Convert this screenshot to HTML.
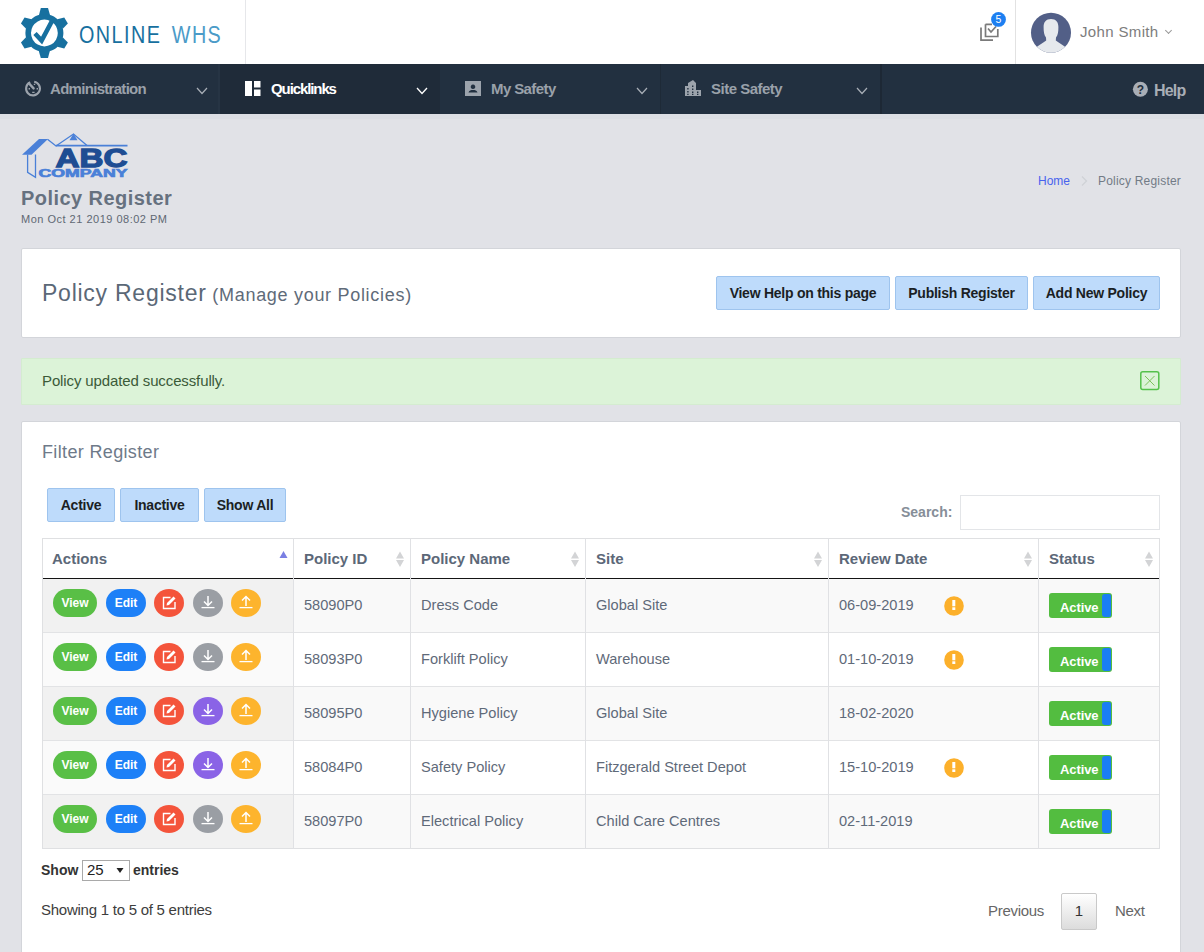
<!DOCTYPE html>
<html><head><meta charset="utf-8">
<style>
*{box-sizing:border-box;margin:0;padding:0}
html,body{width:1204px;height:952px;overflow:hidden;background:#e1e2e7;font-family:"Liberation Sans",sans-serif;color:#6c7683}
.abs{position:absolute}
#hdr{position:absolute;left:0;top:0;width:1204px;height:64px;background:#fff}
#nav{position:absolute;left:0;top:64px;width:1204px;height:50px;background:#223040}
.ni{position:absolute;top:0;height:50px;width:220px}
.nt{position:absolute;top:16px;font-size:15px;font-weight:bold;color:#9aa1aa;white-space:nowrap}
.chev{position:absolute;top:21px;width:8px;height:8px;border-right:1.3px solid #a9afb7;border-bottom:1.3px solid #a9afb7;transform:rotate(45deg)}
.card{position:absolute;background:#fff;border:1px solid #d3d5da;border-radius:2px}
.btn{position:absolute;background:#bedbfb;border:1px solid #9ec4ee;border-radius:2px;color:#1b1f24;font-size:14px;letter-spacing:-0.25px;font-weight:bold;text-align:center;white-space:nowrap}
table{border-collapse:collapse}
.th{position:absolute;font-size:15px;font-weight:bold;color:#5c6878}
.td{position:absolute;font-size:14.6px;color:#5f6a79;white-space:nowrap}
</style></head><body>
<div id="hdr">
 <svg class="abs" style="left:0;top:0" width="80" height="64" viewBox="0 0 80 64">
  <g fill="#17709f">
   <path id="tooth" d="M40.8 8 L48 8 L50 15 L39 15 Z"/>
   <use href="#tooth" transform="rotate(60 44.4 33)"/>
   <use href="#tooth" transform="rotate(120 44.4 33)"/>
   <use href="#tooth" transform="rotate(180 44.4 33)"/>
   <use href="#tooth" transform="rotate(240 44.4 33)"/>
   <use href="#tooth" transform="rotate(300 44.4 33)"/>
   <path fill-rule="evenodd" d="M44.4 14 A19 19 0 1 1 44.39 14 Z M44.4 19.6 A13.4 13.4 0 1 0 44.41 19.6 Z"/>
  </g>
  <path d="M35 33.5 L41.6 40.5 L52 21" stroke="#17709f" stroke-width="4.6" fill="none" stroke-linejoin="miter"/>
 </svg>
 <div class="abs" style="left:79px;top:22px;font-size:23px;letter-spacing:1.7px;color:#17709f;white-space:nowrap;transform:scaleX(0.86);transform-origin:0 0">ONLINE<span style="color:#4b9bc8;margin-left:12px">WHS</span></div>
 <div class="abs" style="left:245px;top:0;width:1px;height:64px;background:#e6e7ea"></div>
 <svg class="abs" style="left:975px;top:8px" width="35" height="40" viewBox="0 0 35 40">
  <path d="M6 19.5 V32.2 H18" stroke="#7a7a7a" stroke-width="1.7" fill="none"/>
  <path d="M10.5 16.3 H17 M22.8 21 V28.5 H10.5 V16.3" stroke="#7a7a7a" stroke-width="1.7" fill="none"/>
  <path d="M13 20.5 L16 24 L21 18.5" stroke="#7a7a7a" stroke-width="1.7" fill="none"/>
  <circle cx="23.5" cy="11.4" r="7.4" fill="#1d7ff1"/>
  <text x="23.5" y="15.3" font-size="10.5" font-family="Liberation Sans" fill="#fff" text-anchor="middle">5</text>
 </svg>
 <div class="abs" style="left:1015px;top:0;width:1px;height:64px;background:#e2e2e2"></div>
 <svg class="abs" style="left:1030px;top:12px" width="42" height="42" viewBox="0 0 42 42">
  <defs><clipPath id="avc"><circle cx="21" cy="20.7" r="20"/></clipPath></defs>
  <circle cx="21" cy="20.7" r="20" fill="#525f87"/>
  <g clip-path="url(#avc)" fill="#e6e9ed">
   <path d="M21 7 C16 7 13.6 10 13.6 15 C13.6 19.5 14 23 16 25.5 L16.2 28.5 C13 31 9 33 6 35.5 L5 44 L37 44 L36 35.5 C33 33 29 31 25.8 28.5 L26 25.5 C28 23 28.4 19.5 28.4 15 C28.4 10 26 7 21 7 Z"/>
  </g>
 </svg>
 <div class="abs" style="left:1080px;top:23px;font-size:15px;color:#7d7d7d;white-space:nowrap;letter-spacing:0.35px">John Smith</div>
 <div class="abs" style="left:1166px;top:28px;width:5px;height:5px;border-right:1.2px solid #999;border-bottom:1.2px solid #999;transform:rotate(45deg)"></div>
</div>
<div id="nav">
 <div class="ni" style="left:220px;background:#1f2b39"></div>
 <div class="abs" style="left:218px;top:0;width:2px;height:50px;background:#263444"></div>
 <div class="abs" style="left:660px;top:0;width:1px;height:50px;background:#1e2a37"></div>
 <div class="abs" style="left:880px;top:0;width:2px;height:50px;background:#1d2835"></div>
 <svg class="abs" style="left:24px;top:15px" width="20" height="20" viewBox="0 0 20 20">
  <path d="M6.2 3.2 A6.9 6.9 0 1 0 10.2 2.7" stroke="#9ca3ac" stroke-width="2.1" fill="none"/>
  <path d="M4.8 4.3 L9.6 9.4" stroke="#9ca3ac" stroke-width="2.4" stroke-linecap="round"/>
  <path d="M10.5 4.8 L10.5 6 M4.6 9.8 L6 9.8 M12.6 9.8 L14 9.8 M8.2 13.4 L10.6 13.4" stroke="#9ca3ac" stroke-width="1.4"/>
 </svg>
 <div class="nt" style="left:50px;letter-spacing:-0.7px">Administration</div>
 <svg class="abs" style="left:196px;top:23px" width="12" height="8" viewBox="0 0 12 8"><path d="M1 1 L6 6.5 L11 1" stroke="#a9afb7" stroke-width="1.2" fill="none"/></svg>
 <svg class="abs" style="left:245px;top:17px" width="16" height="16" viewBox="0 0 16 16">
  <path d="M0 0 H7 V15 H0 Z M9 0 H15.5 V6.5 H9 Z M9 8.5 H15.5 V15 H9 Z" fill="#fff"/>
 </svg>
 <div class="nt" style="left:271px;color:#fff;letter-spacing:-1.1px">Quicklinks</div>
 <svg class="abs" style="left:416px;top:23px" width="12" height="8" viewBox="0 0 12 8"><path d="M1 1 L6 6.5 L11 1" stroke="#fff" stroke-width="1.3" fill="none"/></svg>
 <svg class="abs" style="left:465px;top:17px" width="16" height="16" viewBox="0 0 16 16">
  <path fill-rule="evenodd" d="M0 0 H16 V15 H0 Z M8 3.5 A2.3 2.3 0 1 0 8.01 3.5 Z M3.5 11.5 C4 9.5 6 9 8 9 C10 9 12 9.5 12.5 11.5 Z" fill="#9ca3ac"/>
 </svg>
 <div class="nt" style="left:491px;letter-spacing:-0.6px">My Safety</div>
 <svg class="abs" style="left:636px;top:23px" width="12" height="8" viewBox="0 0 12 8"><path d="M1 1 L6 6.5 L11 1" stroke="#a9afb7" stroke-width="1.2" fill="none"/></svg>
 <svg class="abs" style="left:685px;top:16px" width="17" height="17" viewBox="0 0 17 17">
  <path fill-rule="evenodd" fill="#9ca3ac" d="M0 6 H3 V3 L8 0 L11 3 V10 H16 V16 H0 Z M2.2 8 h1.4 v1.4 h-1.4 Z M7 5.5 h1.4 v1.4 h-1.4 Z M2.2 11 h1.4 v1.4 h-1.4 Z M7 8.5 h1.4 v1.4 h-1.4 Z M7 11.5 h1.4 v1.4 h-1.4 Z M12 11.5 h1.4 v1.4 h-1.4 Z M2.2 13.8 h1.4 v1.2 h-1.4 Z M7 13.8 h1.4 v1.2 h-1.4 Z M12 13.8 h1.4 v1.2 h-1.4 Z"/>
 </svg>
 <div class="nt" style="left:711px;letter-spacing:-0.5px">Site Safety</div>
 <svg class="abs" style="left:856px;top:23px" width="12" height="8" viewBox="0 0 12 8"><path d="M1 1 L6 6.5 L11 1" stroke="#a9afb7" stroke-width="1.2" fill="none"/></svg>
 <svg class="abs" style="left:1132px;top:17px" width="17" height="17" viewBox="0 0 17 17">
  <circle cx="8.4" cy="8.2" r="7.5" fill="#a9aeb6"/>
  <text x="8.4" y="12.7" font-size="12" font-weight="bold" font-family="Liberation Sans" fill="#212d3c" text-anchor="middle">?</text>
 </svg>
 <div class="nt" style="left:1154px;color:#a9aeb6;font-size:16px;top:18px;letter-spacing:-0.8px">Help</div>
</div>

<div class="abs" style="left:0;top:114px;width:1204px;height:5px;background:#dcdee4"></div>
<!-- page header -->
<svg class="abs" style="left:18px;top:128px" width="115" height="54" viewBox="18 128 115 54">
 <g fill="#4a80d8">
  <path d="M22 154.8 L39 139 L48 139 L31.5 154.8 Z"/>
  <path d="M73.5 133.5 L69.5 140.3 L77.5 140.3 Z"/>
 </g>
 <g stroke="#4a80d8" fill="none" stroke-width="1.3">
  <path d="M47.5 139.3 L56 146 L73.5 134 L87 145.5"/>
  <path d="M56 145.7 H127.5" stroke-width="1.7"/>
  <path d="M27.6 154.5 V172.3 L35.5 177.3 V154.5"/>
 </g>
 <text x="55.5" y="166.8" font-family="Liberation Sans" font-weight="bold" font-size="26.3" fill="#1e4d93" stroke="#1e4d93" stroke-width="1.3" textLength="72" lengthAdjust="spacingAndGlyphs">ABC</text>
 <text x="38.5" y="177.3" font-family="Liberation Sans" font-weight="bold" font-size="10" fill="#4a80d8" stroke="#4a80d8" stroke-width="0.6" textLength="89" lengthAdjust="spacingAndGlyphs">COMPANY</text>
</svg>
<div class="abs" style="left:21px;top:187px;font-size:20px;font-weight:bold;color:#66717f;white-space:nowrap;letter-spacing:0.45px">Policy Register</div>
<div class="abs" style="left:21px;top:213px;font-size:11px;color:#5f6873;white-space:nowrap;letter-spacing:0.5px">Mon Oct 21 2019 08:02 PM</div>
<div class="abs" style="left:1038px;top:174px;font-size:12px;color:#4862ee;white-space:nowrap">Home</div>
<svg class="abs" style="left:1080px;top:174px" width="10" height="14" viewBox="0 0 10 14"><path d="M2 2.5 L6.5 7 L2 11.5" stroke="#cfd1d6" stroke-width="1.2" fill="none"/></svg>
<div class="abs" style="left:1098px;top:174px;font-size:12px;color:#727b86;white-space:nowrap;letter-spacing:0.2px">Policy Register</div>

<!-- card 1 -->
<div class="card" style="left:21px;top:248px;width:1160px;height:90px"></div>
<div class="abs" style="left:42px;top:280px;font-size:23px;letter-spacing:0.75px;color:#5b6877;white-space:nowrap">Policy Register<span style="font-size:18px;color:#5f6b79;letter-spacing:0.7px;margin-left:0px"> (Manage your Policies)</span></div>
<div class="btn" style="left:716px;top:276px;width:174px;height:34px;line-height:32px">View Help on this page</div>
<div class="btn" style="left:895px;top:276px;width:133px;height:34px;line-height:32px">Publish Register</div>
<div class="btn" style="left:1033px;top:276px;width:127px;height:34px;line-height:32px">Add New Policy</div>

<!-- alert -->
<div class="abs" style="left:21px;top:358px;width:1160px;height:47px;background:#dcf3d8;border:1px solid #d4ecd0;border-radius:1px"></div>
<div class="abs" style="left:42px;top:372px;font-size:15px;letter-spacing:-0.12px;color:#3b5a38;white-space:nowrap">Policy updated successfully.</div>
<svg class="abs" style="left:1139px;top:370px" width="22" height="21" viewBox="0 0 22 21">
 <rect x="1.8" y="1.8" width="18" height="17.6" rx="2" stroke="#55c14c" stroke-width="1.5" fill="none"/>
 <path d="M6 6 L15.5 15.5 M15.5 6 L6 15.5" stroke="#7cc25a" stroke-width="1"/>
</svg>

<!-- card 2 -->
<div class="card" style="left:21px;top:421px;width:1160px;height:560px"></div>
<div class="abs" style="left:42px;top:442px;font-size:18px;color:#6e7a89;white-space:nowrap;letter-spacing:0.35px">Filter Register</div>
<div class="btn" style="left:47px;top:488px;width:68px;height:34px;line-height:32px">Active</div>
<div class="btn" style="left:120px;top:488px;width:79px;height:34px;line-height:32px">Inactive</div>
<div class="btn" style="left:204px;top:488px;width:82px;height:34px;line-height:32px">Show All</div>
<div class="abs" style="left:901px;top:504px;font-size:14px;font-weight:bold;color:#868e98;white-space:nowrap">Search:</div>
<div class="abs" style="left:960px;top:495px;width:200px;height:35px;border:1px solid #e3e5e8;background:#fff"></div>

<!-- table -->
<div class="abs" style="left:42px;top:538px;width:1118px;height:311px;background:#fff;border:1px solid #dfe0e2"></div>
<div class="abs" style="left:43px;top:579px;width:1116px;height:53px;background:#f9f9f9"></div>
<div class="abs" style="left:43px;top:579px;width:250px;height:53px;background:#f1f1f1"></div>
<div class="abs" style="left:43px;top:632px;width:1116px;height:1px;background:#e2e3e5"></div>
<div class="abs" style="left:43px;top:633px;width:1116px;height:53px;background:#ffffff"></div>
<div class="abs" style="left:43px;top:633px;width:250px;height:53px;background:#fafafa"></div>
<div class="abs" style="left:43px;top:686px;width:1116px;height:1px;background:#e2e3e5"></div>
<div class="abs" style="left:43px;top:687px;width:1116px;height:53px;background:#f9f9f9"></div>
<div class="abs" style="left:43px;top:687px;width:250px;height:53px;background:#f1f1f1"></div>
<div class="abs" style="left:43px;top:740px;width:1116px;height:1px;background:#e2e3e5"></div>
<div class="abs" style="left:43px;top:741px;width:1116px;height:53px;background:#ffffff"></div>
<div class="abs" style="left:43px;top:741px;width:250px;height:53px;background:#fafafa"></div>
<div class="abs" style="left:43px;top:794px;width:1116px;height:1px;background:#e2e3e5"></div>
<div class="abs" style="left:43px;top:795px;width:1116px;height:53px;background:#f9f9f9"></div>
<div class="abs" style="left:43px;top:795px;width:250px;height:53px;background:#f1f1f1"></div>
<div class="abs" style="left:293px;top:538px;width:1px;height:311px;background:#e0e1e4"></div>
<div class="abs" style="left:410px;top:538px;width:1px;height:311px;background:#e0e1e4"></div>
<div class="abs" style="left:585px;top:538px;width:1px;height:311px;background:#e0e1e4"></div>
<div class="abs" style="left:828px;top:538px;width:1px;height:311px;background:#e0e1e4"></div>
<div class="abs" style="left:1038px;top:538px;width:1px;height:311px;background:#e0e1e4"></div>
<div class="abs" style="left:43px;top:578px;width:1116px;height:1px;background:#141414"></div>
<div class="abs" style="left:293px;top:578px;width:1px;height:1px;background:#e0e1e4"></div>
<div class="abs" style="left:410px;top:578px;width:1px;height:1px;background:#e0e1e4"></div>
<div class="abs" style="left:585px;top:578px;width:1px;height:1px;background:#e0e1e4"></div>
<div class="abs" style="left:828px;top:578px;width:1px;height:1px;background:#e0e1e4"></div>
<div class="abs" style="left:1038px;top:578px;width:1px;height:1px;background:#e0e1e4"></div>
<div class="th" style="left:52px;top:551px;line-height:15px">Actions</div>
<div class="th" style="left:304px;top:551px;line-height:15px">Policy ID</div>
<div class="th" style="left:421px;top:551px;line-height:15px">Policy Name</div>
<div class="th" style="left:596px;top:551px;line-height:15px">Site</div>
<div class="th" style="left:839px;top:551px;line-height:15px">Review Date</div>
<div class="th" style="left:1049px;top:551px;line-height:15px">Status</div>
<svg class="abs" style="left:279px;top:550px" width="10" height="10" viewBox="0 0 10 10"><path d="M0.5 8 L4.5 1 L8.5 8 Z" fill="#7a7fe3"/></svg>
<svg class="abs" style="left:395px;top:551px" width="10" height="17" viewBox="0 0 10 17"><path d="M1 7.5 L5 0.5 L9 7.5 Z M1 9 L5 16 L9 9 Z" fill="#d3d4d6"/></svg>
<svg class="abs" style="left:570px;top:551px" width="10" height="17" viewBox="0 0 10 17"><path d="M1 7.5 L5 0.5 L9 7.5 Z M1 9 L5 16 L9 9 Z" fill="#d3d4d6"/></svg>
<svg class="abs" style="left:813px;top:551px" width="10" height="17" viewBox="0 0 10 17"><path d="M1 7.5 L5 0.5 L9 7.5 Z M1 9 L5 16 L9 9 Z" fill="#d3d4d6"/></svg>
<svg class="abs" style="left:1023px;top:551px" width="10" height="17" viewBox="0 0 10 17"><path d="M1 7.5 L5 0.5 L9 7.5 Z M1 9 L5 16 L9 9 Z" fill="#d3d4d6"/></svg>
<svg class="abs" style="left:1144px;top:551px" width="10" height="17" viewBox="0 0 10 17"><path d="M1 7.5 L5 0.5 L9 7.5 Z M1 9 L5 16 L9 9 Z" fill="#d3d4d6"/></svg>
<div class="td" style="left:304px;top:598px;line-height:15px">58090P0</div>
<div class="td" style="left:421px;top:598px;line-height:15px">Dress Code</div>
<div class="td" style="left:596px;top:598px;line-height:15px">Global Site</div>
<div class="td" style="left:839px;top:598px;line-height:15px">06-09-2019</div>
<svg class="abs" style="left:944px;top:596px" width="20" height="20" viewBox="0 0 20 20"><circle cx="10" cy="10" r="9.8" fill="#fcb02b"/><rect x="8.3" y="4" width="3" height="6.3" fill="#fff"/><rect x="8.3" y="11.3" width="3" height="2.7" fill="#fff"/></svg>
<div class="abs" style="left:1049px;top:593px;width:63px;height:25px;background:#53bd40;border-radius:3px;overflow:hidden"><div class="abs" style="left:53px;top:1px;width:9px;height:23px;background:#1a7ef4;border-radius:3px 2px 2px 3px"></div><div class="abs" style="left:11px;top:8px;font-size:13px;font-weight:bold;color:#fff;line-height:13px;white-space:nowrap;letter-spacing:-0.1px">Active</div></div>
<div class="abs" style="left:53px;top:589px;width:44px;height:28px;background:#59bf46;border-radius:14px;color:#fff;font-size:12px;font-weight:bold;text-align:center;line-height:28px">View</div>
<div class="abs" style="left:106px;top:589px;width:40px;height:28px;background:#1d80f7;border-radius:14px;color:#fff;font-size:12px;font-weight:bold;text-align:center;line-height:28px">Edit</div>
<svg class="abs" style="left:154px;top:589px" width="30" height="28" viewBox="0 0 30 28"><ellipse cx="15" cy="14" rx="15" ry="14" fill="#f4543b"/><path d="M16.5 8.5 H9.5 V19.5 H21 V13" stroke="#fff" stroke-width="1.4" fill="none"/><path d="M12.5 16.5 L13 14 L19.5 7.5 L21.5 9.5 L15 16 Z" fill="#fff"/></svg>
<svg class="abs" style="left:193px;top:589px" width="30" height="28" viewBox="0 0 30 28"><ellipse cx="15" cy="14" rx="15" ry="14" fill="#9a9ea4"/><path d="M15 7 V16 M11 12.5 L15 16.5 L19 12.5" stroke="#fff" stroke-width="1.5" fill="none"/><path d="M8.5 18.6 H21.5" stroke="#fff" stroke-width="1.3"/></svg>
<svg class="abs" style="left:231px;top:589px" width="30" height="28" viewBox="0 0 30 28"><ellipse cx="15" cy="14" rx="15" ry="14" fill="#fdb42d"/><path d="M15 17 V8 M11 11.5 L15 7.5 L19 11.5" stroke="#fff" stroke-width="1.5" fill="none"/><path d="M8.5 18.6 H21.5" stroke="#fff" stroke-width="1.3"/></svg>
<div class="td" style="left:304px;top:652px;line-height:15px">58093P0</div>
<div class="td" style="left:421px;top:652px;line-height:15px">Forklift Policy</div>
<div class="td" style="left:596px;top:652px;line-height:15px">Warehouse</div>
<div class="td" style="left:839px;top:652px;line-height:15px">01-10-2019</div>
<svg class="abs" style="left:944px;top:650px" width="20" height="20" viewBox="0 0 20 20"><circle cx="10" cy="10" r="9.8" fill="#fcb02b"/><rect x="8.3" y="4" width="3" height="6.3" fill="#fff"/><rect x="8.3" y="11.3" width="3" height="2.7" fill="#fff"/></svg>
<div class="abs" style="left:1049px;top:647px;width:63px;height:25px;background:#53bd40;border-radius:3px;overflow:hidden"><div class="abs" style="left:53px;top:1px;width:9px;height:23px;background:#1a7ef4;border-radius:3px 2px 2px 3px"></div><div class="abs" style="left:11px;top:8px;font-size:13px;font-weight:bold;color:#fff;line-height:13px;white-space:nowrap;letter-spacing:-0.1px">Active</div></div>
<div class="abs" style="left:53px;top:643px;width:44px;height:28px;background:#59bf46;border-radius:14px;color:#fff;font-size:12px;font-weight:bold;text-align:center;line-height:28px">View</div>
<div class="abs" style="left:106px;top:643px;width:40px;height:28px;background:#1d80f7;border-radius:14px;color:#fff;font-size:12px;font-weight:bold;text-align:center;line-height:28px">Edit</div>
<svg class="abs" style="left:154px;top:643px" width="30" height="28" viewBox="0 0 30 28"><ellipse cx="15" cy="14" rx="15" ry="14" fill="#f4543b"/><path d="M16.5 8.5 H9.5 V19.5 H21 V13" stroke="#fff" stroke-width="1.4" fill="none"/><path d="M12.5 16.5 L13 14 L19.5 7.5 L21.5 9.5 L15 16 Z" fill="#fff"/></svg>
<svg class="abs" style="left:193px;top:643px" width="30" height="28" viewBox="0 0 30 28"><ellipse cx="15" cy="14" rx="15" ry="14" fill="#9a9ea4"/><path d="M15 7 V16 M11 12.5 L15 16.5 L19 12.5" stroke="#fff" stroke-width="1.5" fill="none"/><path d="M8.5 18.6 H21.5" stroke="#fff" stroke-width="1.3"/></svg>
<svg class="abs" style="left:231px;top:643px" width="30" height="28" viewBox="0 0 30 28"><ellipse cx="15" cy="14" rx="15" ry="14" fill="#fdb42d"/><path d="M15 17 V8 M11 11.5 L15 7.5 L19 11.5" stroke="#fff" stroke-width="1.5" fill="none"/><path d="M8.5 18.6 H21.5" stroke="#fff" stroke-width="1.3"/></svg>
<div class="td" style="left:304px;top:706px;line-height:15px">58095P0</div>
<div class="td" style="left:421px;top:706px;line-height:15px">Hygiene Policy</div>
<div class="td" style="left:596px;top:706px;line-height:15px">Global Site</div>
<div class="td" style="left:839px;top:706px;line-height:15px">18-02-2020</div>
<div class="abs" style="left:1049px;top:701px;width:63px;height:25px;background:#53bd40;border-radius:3px;overflow:hidden"><div class="abs" style="left:53px;top:1px;width:9px;height:23px;background:#1a7ef4;border-radius:3px 2px 2px 3px"></div><div class="abs" style="left:11px;top:8px;font-size:13px;font-weight:bold;color:#fff;line-height:13px;white-space:nowrap;letter-spacing:-0.1px">Active</div></div>
<div class="abs" style="left:53px;top:697px;width:44px;height:28px;background:#59bf46;border-radius:14px;color:#fff;font-size:12px;font-weight:bold;text-align:center;line-height:28px">View</div>
<div class="abs" style="left:106px;top:697px;width:40px;height:28px;background:#1d80f7;border-radius:14px;color:#fff;font-size:12px;font-weight:bold;text-align:center;line-height:28px">Edit</div>
<svg class="abs" style="left:154px;top:697px" width="30" height="28" viewBox="0 0 30 28"><ellipse cx="15" cy="14" rx="15" ry="14" fill="#f4543b"/><path d="M16.5 8.5 H9.5 V19.5 H21 V13" stroke="#fff" stroke-width="1.4" fill="none"/><path d="M12.5 16.5 L13 14 L19.5 7.5 L21.5 9.5 L15 16 Z" fill="#fff"/></svg>
<svg class="abs" style="left:193px;top:697px" width="30" height="28" viewBox="0 0 30 28"><ellipse cx="15" cy="14" rx="15" ry="14" fill="#8a63e6"/><path d="M15 7 V16 M11 12.5 L15 16.5 L19 12.5" stroke="#fff" stroke-width="1.5" fill="none"/><path d="M8.5 18.6 H21.5" stroke="#fff" stroke-width="1.3"/></svg>
<svg class="abs" style="left:231px;top:697px" width="30" height="28" viewBox="0 0 30 28"><ellipse cx="15" cy="14" rx="15" ry="14" fill="#fdb42d"/><path d="M15 17 V8 M11 11.5 L15 7.5 L19 11.5" stroke="#fff" stroke-width="1.5" fill="none"/><path d="M8.5 18.6 H21.5" stroke="#fff" stroke-width="1.3"/></svg>
<div class="td" style="left:304px;top:760px;line-height:15px">58084P0</div>
<div class="td" style="left:421px;top:760px;line-height:15px">Safety Policy</div>
<div class="td" style="left:596px;top:760px;line-height:15px">Fitzgerald Street Depot</div>
<div class="td" style="left:839px;top:760px;line-height:15px">15-10-2019</div>
<svg class="abs" style="left:944px;top:758px" width="20" height="20" viewBox="0 0 20 20"><circle cx="10" cy="10" r="9.8" fill="#fcb02b"/><rect x="8.3" y="4" width="3" height="6.3" fill="#fff"/><rect x="8.3" y="11.3" width="3" height="2.7" fill="#fff"/></svg>
<div class="abs" style="left:1049px;top:755px;width:63px;height:25px;background:#53bd40;border-radius:3px;overflow:hidden"><div class="abs" style="left:53px;top:1px;width:9px;height:23px;background:#1a7ef4;border-radius:3px 2px 2px 3px"></div><div class="abs" style="left:11px;top:8px;font-size:13px;font-weight:bold;color:#fff;line-height:13px;white-space:nowrap;letter-spacing:-0.1px">Active</div></div>
<div class="abs" style="left:53px;top:751px;width:44px;height:28px;background:#59bf46;border-radius:14px;color:#fff;font-size:12px;font-weight:bold;text-align:center;line-height:28px">View</div>
<div class="abs" style="left:106px;top:751px;width:40px;height:28px;background:#1d80f7;border-radius:14px;color:#fff;font-size:12px;font-weight:bold;text-align:center;line-height:28px">Edit</div>
<svg class="abs" style="left:154px;top:751px" width="30" height="28" viewBox="0 0 30 28"><ellipse cx="15" cy="14" rx="15" ry="14" fill="#f4543b"/><path d="M16.5 8.5 H9.5 V19.5 H21 V13" stroke="#fff" stroke-width="1.4" fill="none"/><path d="M12.5 16.5 L13 14 L19.5 7.5 L21.5 9.5 L15 16 Z" fill="#fff"/></svg>
<svg class="abs" style="left:193px;top:751px" width="30" height="28" viewBox="0 0 30 28"><ellipse cx="15" cy="14" rx="15" ry="14" fill="#8a63e6"/><path d="M15 7 V16 M11 12.5 L15 16.5 L19 12.5" stroke="#fff" stroke-width="1.5" fill="none"/><path d="M8.5 18.6 H21.5" stroke="#fff" stroke-width="1.3"/></svg>
<svg class="abs" style="left:231px;top:751px" width="30" height="28" viewBox="0 0 30 28"><ellipse cx="15" cy="14" rx="15" ry="14" fill="#fdb42d"/><path d="M15 17 V8 M11 11.5 L15 7.5 L19 11.5" stroke="#fff" stroke-width="1.5" fill="none"/><path d="M8.5 18.6 H21.5" stroke="#fff" stroke-width="1.3"/></svg>
<div class="td" style="left:304px;top:814px;line-height:15px">58097P0</div>
<div class="td" style="left:421px;top:814px;line-height:15px">Electrical Policy</div>
<div class="td" style="left:596px;top:814px;line-height:15px">Child Care Centres</div>
<div class="td" style="left:839px;top:814px;line-height:15px">02-11-2019</div>
<div class="abs" style="left:1049px;top:809px;width:63px;height:25px;background:#53bd40;border-radius:3px;overflow:hidden"><div class="abs" style="left:53px;top:1px;width:9px;height:23px;background:#1a7ef4;border-radius:3px 2px 2px 3px"></div><div class="abs" style="left:11px;top:8px;font-size:13px;font-weight:bold;color:#fff;line-height:13px;white-space:nowrap;letter-spacing:-0.1px">Active</div></div>
<div class="abs" style="left:53px;top:805px;width:44px;height:28px;background:#59bf46;border-radius:14px;color:#fff;font-size:12px;font-weight:bold;text-align:center;line-height:28px">View</div>
<div class="abs" style="left:106px;top:805px;width:40px;height:28px;background:#1d80f7;border-radius:14px;color:#fff;font-size:12px;font-weight:bold;text-align:center;line-height:28px">Edit</div>
<svg class="abs" style="left:154px;top:805px" width="30" height="28" viewBox="0 0 30 28"><ellipse cx="15" cy="14" rx="15" ry="14" fill="#f4543b"/><path d="M16.5 8.5 H9.5 V19.5 H21 V13" stroke="#fff" stroke-width="1.4" fill="none"/><path d="M12.5 16.5 L13 14 L19.5 7.5 L21.5 9.5 L15 16 Z" fill="#fff"/></svg>
<svg class="abs" style="left:193px;top:805px" width="30" height="28" viewBox="0 0 30 28"><ellipse cx="15" cy="14" rx="15" ry="14" fill="#9a9ea4"/><path d="M15 7 V16 M11 12.5 L15 16.5 L19 12.5" stroke="#fff" stroke-width="1.5" fill="none"/><path d="M8.5 18.6 H21.5" stroke="#fff" stroke-width="1.3"/></svg>
<svg class="abs" style="left:231px;top:805px" width="30" height="28" viewBox="0 0 30 28"><ellipse cx="15" cy="14" rx="15" ry="14" fill="#fdb42d"/><path d="M15 17 V8 M11 11.5 L15 7.5 L19 11.5" stroke="#fff" stroke-width="1.5" fill="none"/><path d="M8.5 18.6 H21.5" stroke="#fff" stroke-width="1.3"/></svg>
<div class="abs" style="left:41px;top:863px;font-size:14px;font-weight:bold;color:#333;white-space:nowrap;line-height:15px">Show</div>
<div class="abs" style="left:82px;top:860px;width:48px;height:21px;border:1px solid #a9a9a9;border-radius:0;background:#fff"><div class="abs" style="left:4px;top:1px;font-size:15px;color:#222;line-height:15px">25</div><svg class="abs" style="left:33px;top:6px" width="8" height="7" viewBox="0 0 8 7"><path d="M0.5 1 H7.5 L4 6 Z" fill="#222"/></svg></div>
<div class="abs" style="left:133px;top:863px;font-size:14px;font-weight:bold;color:#333;white-space:nowrap;line-height:15px">entries</div>
<div class="abs" style="left:41px;top:902px;font-size:15px;color:#3d3d3d;letter-spacing:-0.25px;white-space:nowrap;line-height:15px">Showing 1 to 5 of 5 entries</div>
<div class="abs" style="left:988px;top:903px;font-size:15px;letter-spacing:-0.3px;color:#666;white-space:nowrap;line-height:15px">Previous</div>
<div class="abs" style="left:1061px;top:893px;width:36px;height:37px;border:1px solid #c9c9c9;border-radius:2px;background:linear-gradient(#fff,#dcdcdc);font-size:15px;color:#333;text-align:center;line-height:33px">1</div>
<div class="abs" style="left:1115px;top:903px;font-size:15px;letter-spacing:-0.3px;color:#666;white-space:nowrap;line-height:15px">Next</div>
</body></html>
